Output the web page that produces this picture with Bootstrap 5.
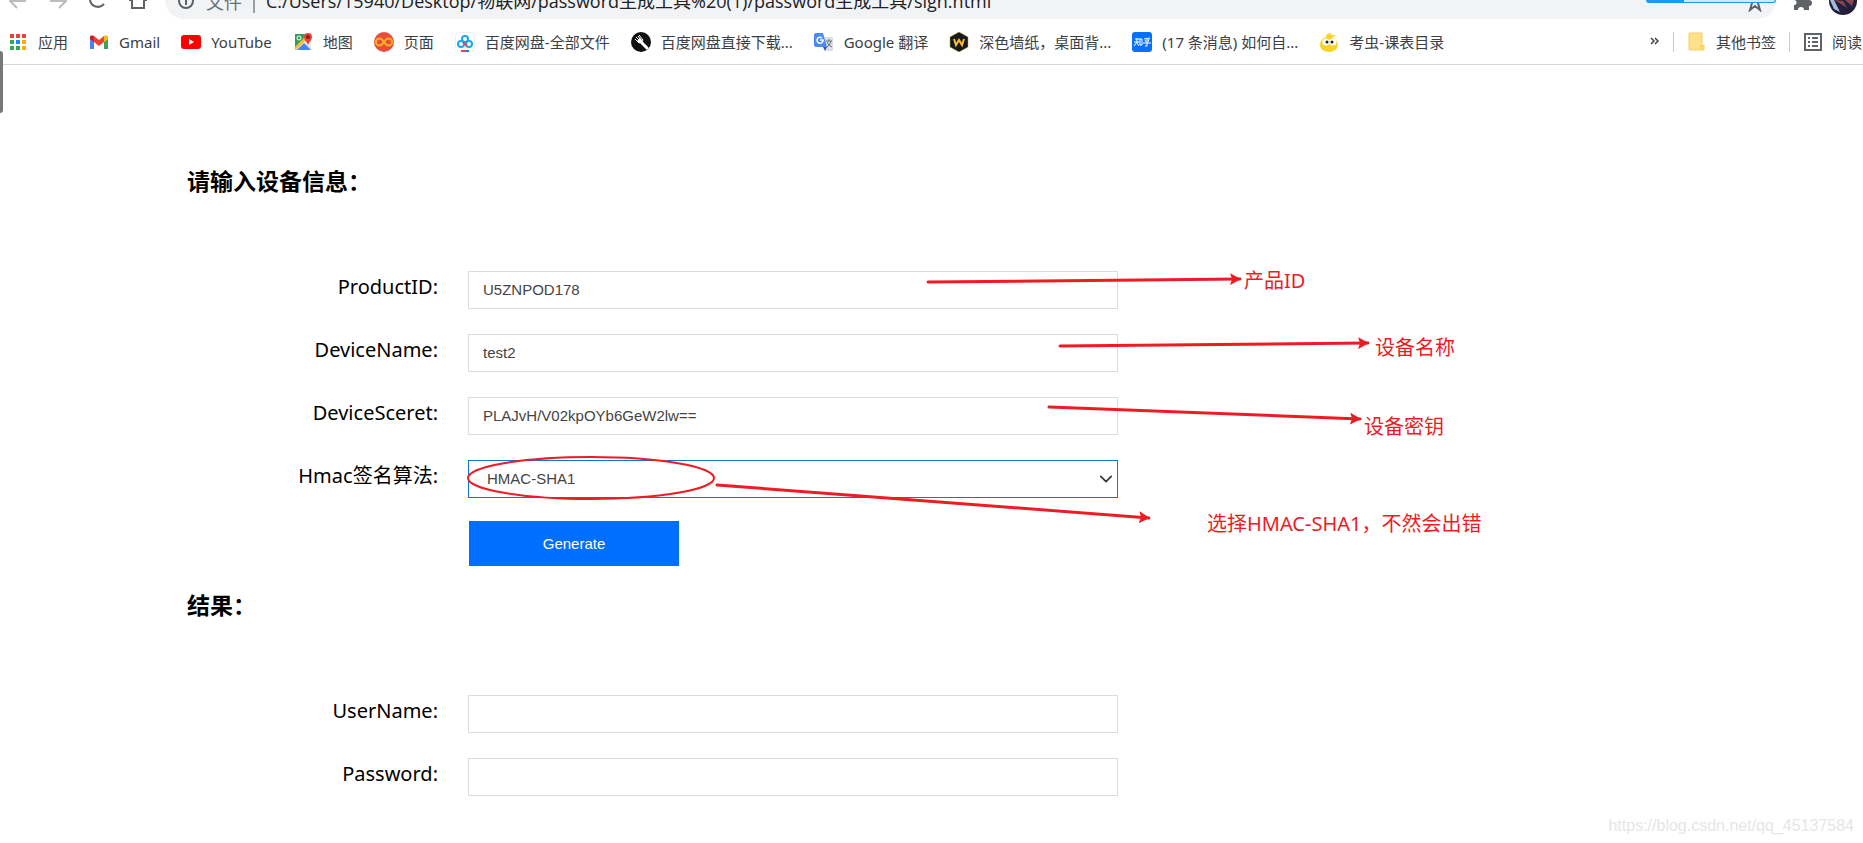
<!DOCTYPE html>
<html lang="zh-CN">
<head>
<meta charset="utf-8">
<meta name="viewport" content="width=device-width, initial-scale=1">
<title>sign.html</title>
<link href="https://cdn.jsdelivr.net/npm/bootstrap@5.3.0/dist/css/bootstrap.min.css" rel="stylesheet">
<style>
  body { font-family: "Noto Sans", "Noto Sans CJK SC", sans-serif; color: #000; background: #fff; overflow-x: hidden; }
  .toolbar { height: 19px; gap: 17px; padding: 0 6px 0 8px; }
  .toolbar svg, .bookmarks svg { flex: none; display: block; }
  .tool-btn { border: 0; background: none; padding: 0; line-height: 0; }
  .nav-tools { gap: 18px; width: 157px; }
  .omnibox { height: 38px; background: #f1f3f4; border-radius: 19px; padding: 3px 12px 0; font-family: "Open Sans", "Noto Sans CJK SC", sans-serif; font-size: 18px; gap: 11px; }
  .omnibox input { border: 0; background: none; padding: 0; color: #202124; outline: 0; min-width: 0; }
  .scheme { color: #6b6f73; line-height: 34px; }
  .scheme-bar { width: 2px; height: 22px; background: #9a9da1; }
  .progress-strip { top: 0; right: 87px; width: 130px; height: 3px; border: 1px solid #1e98f5; border-top: 0; border-radius: 0 0 4px 4px; background: linear-gradient(90deg, #1e98f5 37px, #cdeafd 37px); }
  .bookmarks { height: 46px; border-bottom: 1px solid #d5d7dc; padding-left: 8px; gap: 21px; font-size: 15px; line-height: 20px; white-space: nowrap; }
  .bookmarks a { color: #3c4043; text-decoration: none; display: flex; align-items: center; gap: 10px; flex: none; }
  .bm-tail { gap: 13px; width: 214px; flex: none; overflow: hidden; }
  .bm-tail a { gap: 9px; }
  .bm-rule { width: 1px; height: 20px; background: #c8cacd; flex: none; }
  .edge-handle { left: -3px; top: 51px; width: 6px; height: 62px; border-radius: 3px; background: #777; }
  .page { padding-left: 187px; padding-top: 98px; }
  .panel { max-width: 931px; }
  .panel h3 { font-size: 23px; line-height: 36px; font-weight: 700; margin: 0; }
  .fields { display: grid; grid-template-columns: 251px 1fr; column-gap: 30px; row-gap: 25px; align-items: center; }
  .fields label { font-size: 20px; line-height: 32px; padding-bottom: 6px; text-align: right; }
  .fields .form-control, .fields .form-select { height: 38px; border: 1px solid #dcdcdc; border-radius: 0; padding: 0 14px 2px; font: 15px "Liberation Sans", Arial, sans-serif; color: #444; }
  .fields .form-select { border-color: #0f73e6; padding-left: 18px; background-position: right 4px center; background-size: 14px 14px; }
  .first-set { margin-top: 72px; }
  .second-set { margin-top: 72px; }
  .btn-generate { width: 210px; height: 45px; margin: 23px 0 21px 282px; border: 0; border-radius: 0; padding: 0; background: #006eff; color: #fff; font: 15px "Liberation Sans", Arial, sans-serif; }
  .marks { left: 0; top: 0; pointer-events: none; overflow: visible; }
  .marks line { stroke: #ed1c24; stroke-width: 3; stroke-linecap: round; }
  .marks text { fill: #ed1c24; font-size: 20px; }
  .watermark { margin-top: 20px; padding-right: 9px; font: 16px/20px "Liberation Sans", Arial, sans-serif; color: #e6e6e6; }
</style>
</head>
<body>
<header>
  <div class="toolbar d-flex align-items-end position-relative">
    <div class="progress-strip position-absolute"></div>
    <div class="omni-wrap d-flex align-items-end flex-grow-1">
      <div class="nav-tools d-flex align-items-end flex-shrink-0">
        <button class="tool-btn" aria-label="后退"><svg width="22" height="19" viewBox="0 0 22 19"><path d="M18 1H3M9-6 2 1l7 7" fill="none" stroke="#babcbe" stroke-width="2"/></svg></button>
        <button class="tool-btn" aria-label="前进"><svg width="22" height="19" viewBox="0 0 22 19"><path d="M2 1h15M11-6l7 7-7 7" fill="none" stroke="#babcbe" stroke-width="2"/></svg></button>
        <button class="tool-btn" aria-label="刷新"><svg width="22" height="19" viewBox="0 0 22 19"><path d="M2 0a8 8 0 0 0 14 4" fill="none" stroke="#5f6368" stroke-width="2"/></svg></button>
        <button class="tool-btn" aria-label="主页"><svg width="22" height="19" viewBox="0 0 22 19"><path d="M1 0h3v8h12V0h3" fill="none" stroke="#5f6368" stroke-width="2"/></svg></button>
      </div>
      <div class="omnibox d-flex align-items-center flex-grow-1">
        <svg width="18" height="18" viewBox="0 0 18 18"><circle cx="9" cy="8" r="7" fill="none" stroke="#5f6368" stroke-width="2"/><path d="M9 7v5M9 4v2" stroke="#5f6368" stroke-width="2"/></svg>
        <span class="scheme">文件</span><span class="scheme-bar"></span>
        <input class="flex-grow-1" aria-label="地址" value="C:/Users/15940/Desktop/物联网/password生成工具%20(1)/password生成工具/sign.html">
        <svg width="18" height="20" viewBox="0 0 18 20"><path d="M9 2l2 5h5l-4 4 2 7-5-4-5 4 2-7-4-4h5z" fill="none" stroke="#5f6368" stroke-width="2"/></svg>
      </div>
    </div>
    <div class="d-flex align-items-end">
      <button class="tool-btn me-3" aria-label="扩展程序"><svg width="20" height="19" viewBox="0 0 20 19"><path d="M1-3h15v3a3 3 0 0 1 0 6v4h-5a3 3 0 0 0-6 0H1V5a2 2 0 0 0 0-5z" fill="#5f6368"/></svg></button>
      <button class="tool-btn" aria-label="用户"><svg width="28" height="19" viewBox="0 0 28 19"><circle cx="14" cy="1" r="14" fill="#22203a"/><path d="M5 0l9 1 4 7-6-4zM16 0l7 6 2-6z" fill="#8b4552"/><path d="M1 0h4l6 12-6-3z" fill="#a9b9d8"/></svg></button>
    </div>
  </div>
  <nav class="bookmarks d-flex align-items-center" aria-label="书签">
    <a href="#"><svg width="20" height="20"><path d="M2 2h4v4H2zM8 2h4v4H8zM14 2h4v4h-4z" fill="#ea4335"/><path d="M2 8h4v4H2zM2 14h4v4H2zM8 14h4v4H8z" fill="#34a853"/><path d="M8 8h4v4H8z" fill="#1a8cff"/><path d="M14 8h4v4h-4zM14 14h4v4h-4z" fill="#fbab04"/></svg>应用</a>
    <a href="#"><svg width="20" height="20"><path d="M1 6v11h4V9z" fill="#4285f4"/><path d="M15 9v8h4V6z" fill="#34a853"/><path d="M15 5v5l4-3V5q-1-3-4 0z" fill="#fbbc04"/><path d="M1 5q1-3 4-1l5 4 5-4v6l-5 4-5-4-4-3z" fill="#ea4335"/><path d="M1 5q1-2 3-1l1 1v5L1 7z" fill="#c5221f"/><path d="M15 4q4-2 4 2v1l-4 3z" fill="#fbbc04"/></svg>Gmail</a>
    <a href="#"><svg width="20" height="20"><rect y="3" width="20" height="14" rx="3" fill="#f00"/><path d="M8 7l5 3-5 3z" fill="#fff"/></svg>YouTube</a>
    <a href="#"><svg width="20" height="20"><path d="M2 2h13v16H2z" fill="#34a05f"/><path d="M2 18 15 5h3v13z" fill="#e6e8e8"/><path d="M2 15 13 4l2 2L3 18H2z" fill="#fbc02d"/><path d="M4 18l7-7 7 7z" fill="#4285f4"/><circle cx="6" cy="6" r="2" fill="none" stroke="#fff"/><path d="M15 14c0-4-4-5-4-9a4 4 0 0 1 8 0c0 4-4 5-4 9z" fill="#ea4335"/><circle cx="15" cy="5" r="2" fill="#8c1d18"/></svg>地图</a>
    <a href="#"><svg width="20" height="20"><circle cx="10" cy="10" r="10" fill="#e84c3d"/><path d="M10 10C8 7 7 6.500 5.500 6.500a3.500 3.500 0 0 0 0 7C7 13.500 8 13 10 10s3-3.500 4.500-3.500a3.500 3.500 0 0 1 0 7C13 13.500 12 13 10 10z" fill="none" stroke="#f6b51e" stroke-width="2"/></svg>页面</a>
    <a href="#"><svg width="20" height="20"><rect x=".5" y=".5" width="19" height="19" rx="3" fill="#fff" stroke="#f0f1f2"/><g fill="none" stroke-width="2"><circle cx="6" cy="12" r="3" stroke="#18a7f2"/><circle cx="14" cy="12" r="3" stroke="#18a7f2"/><circle cx="10" cy="7" r="3" stroke="#18a7f2"/><path d="M8 10l4 4" stroke="#f04455"/></g><path d="M6 19h4" stroke="#f04455" stroke-width="2"/><path d="M10 19h4" stroke="#2979ff" stroke-width="2"/></svg>百度网盘-全部文件</a>
    <a href="#"><svg width="20" height="20"><circle cx="10" cy="10" r="10" fill="#111"/><path d="M9 9l7 7" stroke="#fff" stroke-width="3" stroke-linecap="round"/><path d="M4 7l4 4 3-1 1-2-4-5M5 5l4 4M7 4l3 4" stroke="#fff" fill="none"/><path d="M6 9l3-3 2 2-1 3-2 0z" fill="#fff"/></svg>百度网盘直接下载...</a>
    <a href="#"><svg width="20" height="20"><path d="M8 5h11v14H11z" fill="#dcdfe1"/><path d="M2 1h7l4 14H2q-2 0-2-2V3q0-2 2-2z" fill="#4a8af4"/><path d="M9 15h4l-2 4z" fill="#3057b0"/><path d="M8 6a3 3 0 1 0 1 2H6" fill="none" stroke="#fff" stroke-width="1.500"/><path d="M12 9h6M15 7v2M17 9q-1 4-4 6M13 10q1 3 5 5" fill="none" stroke="#687078"/></svg><span>Google 翻译</span></a>
    <a href="#"><svg width="20" height="20"><path d="M10 0l9 5v10l-9 5-9-5V5z" fill="#151923" stroke="#c99a26" stroke-width=".5"/><path d="M5 7l2 6 3-5 3 5 2-6" fill="none" stroke="#fcbd2a" stroke-width="2"/></svg>深色墙纸，桌面背...</a>
    <a href="#"><svg width="20" height="20"><rect width="20" height="20" rx="3" fill="#0870fa"/><path d="M3 7h5M5 6v4M2 10h6M5 10l-3 4M5 11l2 3M8 7h2v6H8zM12 7l6-1M13 8l1 2M17 7l-1 3M11 11h8M15 7v7h-2" fill="none" stroke="#fff"/></svg><span>(17 条消息) 如何自...</span></a>
    <a href="#"><svg width="20" height="20"><path d="M7 5Q7 1 13 1l-2 2q4-1 6 1l-4 1q6 3 6 8a9 7 0 0 1-18 0q0-6 6-8z" fill="#f7d325"/><circle cx="7" cy="10" r="3.500" fill="#fff"/><circle cx="14" cy="10" r="3.500" fill="#fff"/><circle cx="8" cy="10" r="1.500" fill="#222"/><circle cx="13" cy="10" r="1.500" fill="#222"/></svg>考虫-课表目录</a>
    <div class="bm-tail d-flex align-items-center ms-auto">
      <button class="tool-btn" aria-label="更多书签"><svg width="11" height="12"><path d="M2 2l3 3-3 3M6 2l3 3-3 3" fill="none" stroke="#444" stroke-width="1.500"/></svg></button>
      <span class="bm-rule"></span>
      <a href="#"><svg width="20" height="20"><path d="M2 1h13v13l2-1v5H2z" fill="#fee28b" stroke="#f1cf60"/><circle cx="15" cy="15" r="2" fill="#fbd657"/></svg>其他书签</a>
      <span class="bm-rule"></span>
      <a href="#"><svg width="20" height="20"><rect x="2" y="2" width="16" height="16" fill="none" stroke="#5f6368" stroke-width="2"/><path d="M5 6h2M5 10h2M5 14h2M9 6h6M9 10h6M9 14h6" stroke="#5f6368" stroke-width="2"/></svg>阅读</a>
    </div>
  </nav>
</header>
<div class="edge-handle position-absolute"></div>

<main class="page">
  <div class="panel position-relative">
    <h3>请输入设备信息：</h3>
    <div class="fields first-set">
      <label for="pid">ProductID:</label><input id="pid" class="form-control" value="U5ZNPOD178">
      <label for="dname">DeviceName:</label><input id="dname" class="form-control" value="test2">
      <label for="dsecret">DeviceSceret:</label><input id="dsecret" class="form-control" value="PLAJvH/V02kpOYb6GeW2lw==">
      <label for="algo">Hmac签名算法:</label><select id="algo" class="form-select"><option>HMAC-SHA1</option></select>
    </div>
    <button class="btn-generate d-block" type="button">Generate</button>
    <h3>结果：</h3>
    <div class="fields second-set">
      <label for="uname">UserName:</label><input id="uname" class="form-control">
      <label for="pwd">Password:</label><input id="pwd" class="form-control">
    </div>

    <!-- hand-drawn notes over the form, origin at the panel's corner -->
    <svg class="marks position-absolute" width="930" height="400" aria-label="标注">
      <defs><marker id="tip" markerUnits="userSpaceOnUse" markerWidth="12" markerHeight="12" refX="10" refY="6" orient="auto"><path d="M0 0l11 6-11 6 2-6z" fill="#ed1c24"/></marker></defs>
      <line x1="741" y1="119" x2="1053" y2="116" marker-end="url(#tip)"/>
      <line x1="873" y1="183" x2="1181" y2="180" marker-end="url(#tip)"/>
      <line x1="862" y1="244" x2="1173" y2="256" marker-end="url(#tip)"/>
      <line x1="530" y1="322" x2="962" y2="355" marker-end="url(#tip)"/>
      <ellipse cx="404" cy="315" rx="123" ry="21" fill="none" stroke="#ed1c24" stroke-width="2"/>
      <text x="1057" y="125">产品ID</text>
      <text x="1188" y="192">设备名称</text>
      <text x="1177" y="271">设备密钥</text>
      <text x="1020" y="368">选择HMAC-SHA1，不然会出错</text>
    </svg>
  </div>
</main>
<footer class="watermark text-end">https://blog.csdn.net/qq_45137584</footer>
<script src="https://cdn.jsdelivr.net/npm/bootstrap@5.3.0/dist/js/bootstrap.bundle.min.js"></script>
</body>
</html>
